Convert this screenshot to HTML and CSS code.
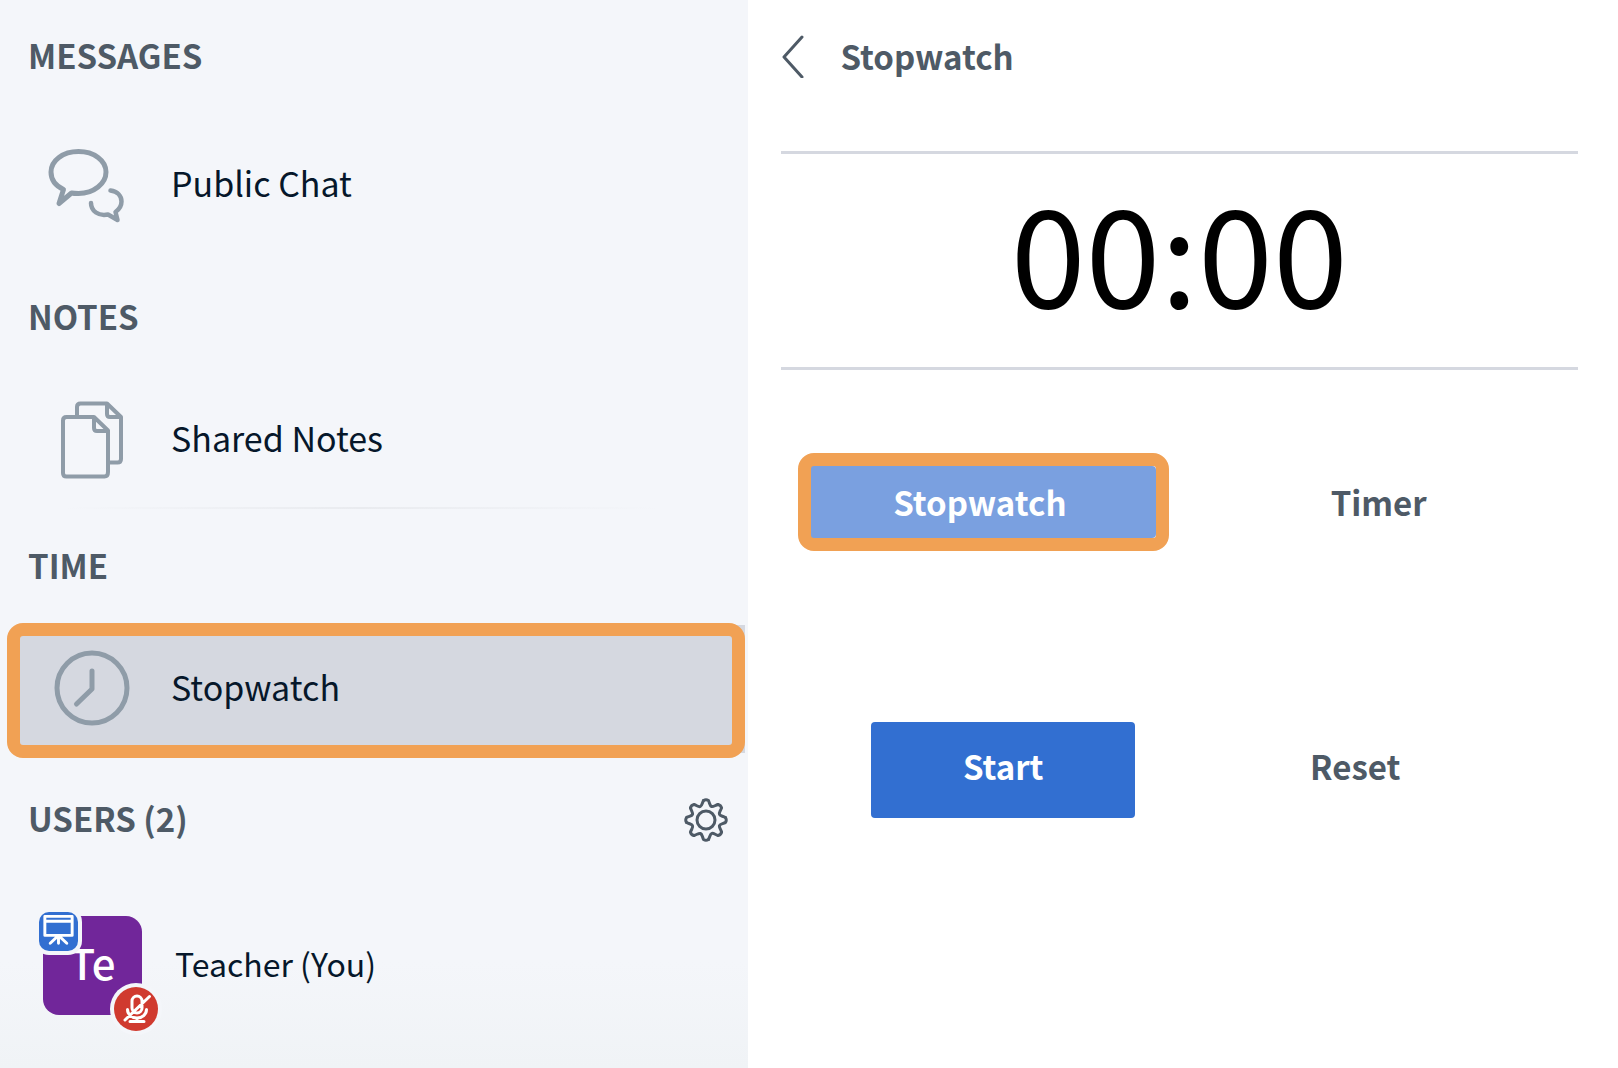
FILE: index.html
```html
<!DOCTYPE html>
<html lang="en">
  <head>
    <meta charset="UTF-8" />
    <meta name="viewport" content="width=device-width, initial-scale=1.0" />
    <title>Stopwatch</title>
    <link rel="stylesheet" href="styles.css">
  </head>
  <body>
    <aside class="sidebar">
      <section class="messages">
        <h2>MESSAGES</h2>
        <a href="#chat" class="list-item">
          <svg class="item-icon" viewBox="0 0 84 84" aria-hidden="true">
            <path stroke-width="5" d="M24.5 50 L12 60.5 L16.5 46.500 C8 42.5 4 36 4 29 C4 17.5 16 8.5 31.5 8.5 S59 17.5 59 29 S47 50.5 31.5 50.5 C29 50.5 26.5 50.5 24.5 50 Z" />
            <path stroke-width="4.5" d="M63.5 47.5 C70.5 48.5 74.5 53 74.5 58.5 C74.5 63 72 66.5 68.5 69 L70.5 77 L61 71.5 C51.5 73.5 44 68 44 60" />
          </svg>
          <span class="label">Public Chat</span>
        </a>
      </section>

      <section class="notes">
        <h2>NOTES</h2>
        <a href="#notes" class="list-item">
          <svg class="item-icon" viewBox="0 0 84 84" aria-hidden="true">
            <path stroke-width="4" d="M30 18 V9 Q30 5.5 33.5 5.5 H60 L74 19 V61 Q74 64.5 70.5 64.5 H62 M60 5.5 V16 Q60 19 63 19 H74" />
            <path stroke-width="4" d="M19.5 19 H47 L61 32.5 V74 Q61 78.5 57.5 78.5 H19.5 Q16 78.5 16 75 V22.5 Q16 19 19.5 19 Z M47 19 V30 Q47 33 50 33 H61" />
          </svg>
          <span class="label">Shared Notes</span>
        </a>
        <hr class="divider">
      </section>

      <section class="time">
        <h2>TIME</h2>
        <a href="#stopwatch" class="list-item selected">
          <svg class="item-icon" viewBox="0 0 84 84" aria-hidden="true">
            <circle stroke-width="5" cx="45" cy="41" r="35" />
            <path stroke-width="5" d="M45 24 V42 L29.5 57" />
          </svg>
          <span class="label">Stopwatch</span>
        </a>
      </section>

      <section class="users">
        <div class="users-header">
          <h2>USERS (2)</h2>
          <button type="button" class="icon-btn" aria-label="Manage users">
            <svg class="gear" viewBox="-22 -22 44 44" aria-hidden="true">
              <g id="teeth">
                <path id="tooth" d="M-2.5 -19.5 Q0 -21 2.5 -19.5 C4 -16 3.8 -14.2 5.6 -13.5 C7.2 -12.9 8.8 -14.5 12 -15.5" />
                <use href="#tooth" transform="rotate(45)" />
                <use href="#tooth" transform="rotate(90)" />
                <use href="#tooth" transform="rotate(135)" />
              </g>
              <use href="#teeth" transform="rotate(180)" />
              <circle r="9" />
            </svg>
          </button>
        </div>
        <div class="user">
          <div class="avatar">
            Te
            <span class="badge presenter">
              <svg viewBox="0 0 40 40" aria-hidden="true">
                <path d="M6 4.500 H34 V24 H6 Z M6 9.500 H34 M20 24 V32 M19 25 L11.5 32 M21 25 L28.500 32" />
              </svg>
            </span>
            <span class="badge muted">
              <svg viewBox="0 0 44 44" aria-hidden="true">
                <path d="M18 14 a5 5 0 0 1 10 0 v7 a5 5 0 0 1 -10 0 Z M13.5 22.5 a9.5 8.5 0 0 0 19 0 M23 31 V34 M16 34.5 H30 M11 33 L35.5 9.5" />
              </svg>
            </span>
          </div>
          <span class="user-name">Teacher (You)</span>
        </div>
      </section>
    </aside>

    <main class="panel">
      <header>
        <button type="button" class="back">
          <svg viewBox="0 0 24 44" aria-hidden="true">
            <path d="M21 3 L3 23 L21 43" />
          </svg>
          Stopwatch
        </button>
      </header>

      <div class="clock">00:00</div>

      <div class="modes">
        <div class="mode">
          <button type="button" class="btn mode-btn active">Stopwatch</button>
        </div>
        <div class="mode">
          <button type="button" class="btn mode-btn">Timer</button>
        </div>
      </div>

      <div class="actions">
        <button type="button" class="btn action-btn primary">Start</button>
        <button type="button" class="btn action-btn">Reset</button>
      </div>
    </main>
  </body>
</html>
```

FILE: styles.css
```css
:root {
  --primary-color: #326fd1;
  --primary-light: #7aa0e0;
  --highlight: #f1a154;
  --sidebar-bg: #f4f6fa;
  --selected-bg: #d5d8e0;
  --heading-color: #4e5a66;
  --text-color: #06172a;
  --icon-color: #8f9ca8;
}

* {
  box-sizing: border-box;
}

body {
  font-family: "Source Sans Pro", "Noto Sans CJK SC", sans-serif;
  color: var(--text-color);
  margin: 0;
  min-height: 100vh;
  display: flex;
  background-color: #ffffff;
}

h2 {
  margin: 0;
  font-size: 33px;
  line-height: 40px;
  font-weight: 700;
  color: var(--heading-color);
}

svg {
  display: block;
  fill: none;
  stroke: currentColor;
  stroke-linecap: round;
  stroke-linejoin: round;
}

button {
  font-family: inherit;
  border: none;
  padding: 0;
  background: none;
  cursor: pointer;
}

.sidebar {
  flex: 0 0 46.2%;
  padding-top: 35px;
  background: linear-gradient(var(--sidebar-bg) 90%, #f0f3f6);
}

.sidebar h2 {
  padding-left: 28px;
  margin-bottom: 40px;
}

.messages .list-item {
  margin-top: 46px;
  margin-bottom: 47px;
}

.list-item {
  position: relative;
  display: flex;
  align-items: center;
  gap: 40px;
  height: 128px;
  margin: 0 3px 0 7px;
  padding-left: 40px;
  color: var(--text-color);
  text-decoration: none;
}

.item-icon {
  width: 84px;
  height: 84px;
  color: var(--icon-color);
}

.label {
  font-size: 34px;
  line-height: 40px;
  padding-bottom: 4px;
}

.divider {
  height: 2px;
  margin: 3px 90px 36px 64px;
  border: none;
  background: linear-gradient(to right, transparent, #e9ebef 50%, transparent);
}

.selected {
  background-color: var(--selected-bg);
  border-radius: 16px 0 0 16px;
}

.selected::after {
  content: "";
  position: absolute;
  inset: -2px 0 -5px 0;
  border: 13px solid var(--highlight);
  border-radius: 16px;
}

.users-header {
  display: flex;
  justify-content: space-between;
  align-items: center;
  margin-top: 45px;
  padding-right: 20px;
}

.sidebar .users-header h2 {
  margin-bottom: 4px;
}

.icon-btn {
  color: var(--heading-color);
}

.gear {
  width: 44px;
  height: 44px;
  stroke-width: 3;
}

.user {
  display: flex;
  align-items: center;
  gap: 33px;
  padding: 74px 0 52px 43px;
}

.avatar {
  position: relative;
  width: 99px;
  height: 99px;
  border-radius: 16px;
  background-color: #71269a;
  color: white;
  font-size: 42px;
  font-weight: 500;
  line-height: 92px;
  text-align: center;
}

.badge {
  position: absolute;
  box-shadow: 0 0 0 4px var(--sidebar-bg);
}

.badge svg {
  width: 100%;
  height: 100%;
  stroke-width: 3;
}

.presenter {
  top: -4px;
  left: -4px;
  width: 39px;
  height: 39px;
  border-radius: 10px;
  background-color: var(--primary-color);
}

.muted {
  right: -16px;
  bottom: -16px;
  width: 44px;
  height: 44px;
  border-radius: 50%;
  background-color: #d03a2f;
}

.user-name {
  font-size: 32px;
  line-height: 40px;
  padding-bottom: 6px;
}

.panel {
  flex: 1;
  min-width: 0;
  padding: 34px 40px 40px 33px;
}

.panel header {
  padding-bottom: 73px;
}

.back {
  display: flex;
  align-items: center;
  gap: 36px;
  font-size: 33px;
  line-height: 40px;
  font-weight: 700;
  color: var(--heading-color);
}

.back svg {
  width: 24px;
  height: 44px;
  stroke-width: 3;
}

.clock {
  border-top: 3px solid var(--selected-bg);
  border-bottom: 3px solid var(--selected-bg);
  padding-bottom: 23px;
  font-size: 135px;
  line-height: 190px;
  text-align: center;
  color: black;
}

.modes {
  display: flex;
  padding-top: 96px;
}

.mode {
  flex: 1;
  display: flex;
  justify-content: center;
}

.btn {
  font-size: 33px;
  line-height: 40px;
  font-weight: 700;
  color: var(--heading-color);
  border-radius: 4px;
}

.mode-btn {
  position: relative;
  width: 352px;
  height: 72px;
}

.mode-btn.active {
  background-color: var(--primary-light);
  color: white;
}

.mode-btn.active::after {
  content: "";
  position: absolute;
  inset: -13px -13px -13px -6px;
  border: 13px solid var(--highlight);
  border-radius: 16px;
}

.actions {
  display: flex;
  justify-content: center;
  gap: 88px;
  margin-top: 184px;
}

.action-btn {
  width: 264px;
  height: 96px;
  padding-bottom: 8px;
}

.primary {
  background-color: var(--primary-color);
  color: white;
}
```
